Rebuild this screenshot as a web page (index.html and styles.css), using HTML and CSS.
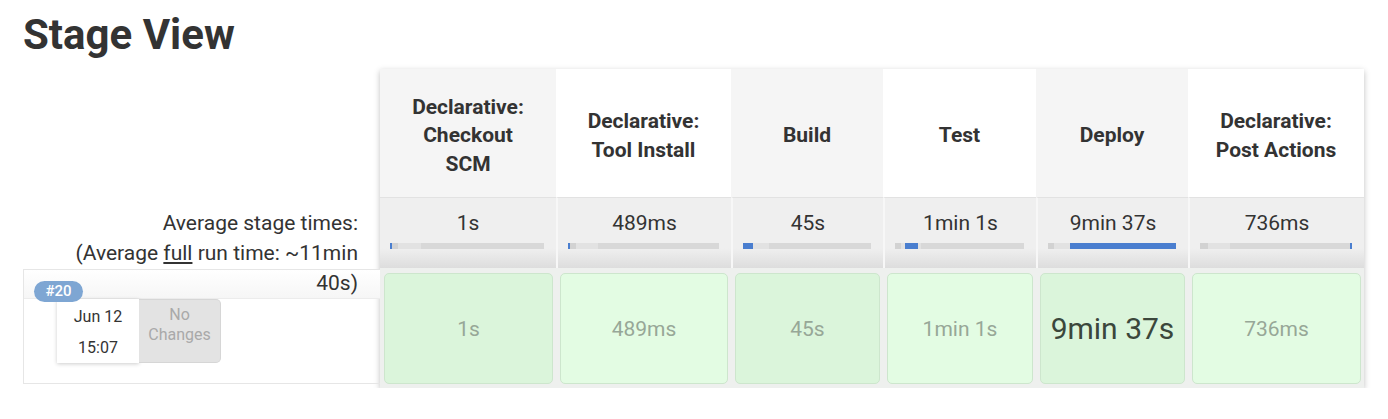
FILE: index.html
```html
<!DOCTYPE html>
<html>
<head>
<meta charset="utf-8">
<title>Stage View</title>
<link rel="stylesheet" href="styles.css">
</head>
<body>
<h2 class="title">Stage View</h2>
<div class="stage-view">
  <div class="labels">
    <div class="labels-head"></div>
    <div class="avg-label">Average stage times:<br>(Average <u>full</u> run time: ~11min<br>40s)</div>
    <div class="build-row">
      <div class="build-top"></div>
      <span class="badge">#20</span>
      <div class="build-info">
        <div class="date">Jun 12<br>15:07</div>
        <div class="changes">No<br>Changes</div>
      </div>
    </div>
  </div>
  <div class="table">
    <div class="th shade">Declarative:<br>Checkout<br>SCM</div>
    <div class="th">Declarative:<br>Tool Install</div>
    <div class="th shade">Build</div>
    <div class="th">Test</div>
    <div class="th shade">Deploy</div>
    <div class="th">Declarative:<br>Post Actions</div>

    <div class="avg first"><div class="val">1s</div><div class="bar"><span class="fill" style="left:0;width:2px"></span></div></div>
    <div class="avg"><div class="val">489ms</div><div class="bar"><span class="fill" style="left:0;width:2px"></span></div></div>
    <div class="avg"><div class="val">45s</div><div class="bar"><span class="fill" style="left:0;width:8%"></span></div></div>
    <div class="avg"><div class="val">1min 1s</div><div class="bar"><span class="fill" style="left:8%;width:10%"></span></div></div>
    <div class="avg"><div class="val">9min 37s</div><div class="bar"><span class="fill" style="left:17%;width:83%"></span></div></div>
    <div class="avg"><div class="val">736ms</div><div class="bar"><span class="fill" style="right:0;width:2px"></span></div></div>

    <div class="cell"><div class="box dark">1s</div></div>
    <div class="cell"><div class="box">489ms</div></div>
    <div class="cell"><div class="box dark">45s</div></div>
    <div class="cell"><div class="box">1min 1s</div></div>
    <div class="cell"><div class="box dark big">9min 37s</div></div>
    <div class="cell"><div class="box">736ms</div></div>
  </div>
</div>
</body>
</html>
```

FILE: styles.css
```css
body {
  margin: 0;
  padding: 0 22px 0 23px;
  font-family: Roboto, "Liberation Sans", Arial, sans-serif;
  color: #333;
  background: #fff;
}

.title {
  margin: 12px 0 11px;
  font-size: 42px;
  line-height: 46px;
  font-weight: 700;
  color: #333;
}

.stage-view {
  display: flex;
  align-items: flex-start;
}

.labels {
  flex: none;
  width: 357px;
  display: flex;
  flex-direction: column;
}

.labels-head {
  height: 128px;
}

.avg-label {
  position: relative;
  z-index: 1;
  height: 72px;
  box-sizing: border-box;
  padding: 11px 22px 0 0;
  text-align: right;
  font-size: 21px;
  line-height: 30px;
  color: #333;
}

.build-row {
  position: relative;
  height: 115px;
  box-sizing: border-box;
  border: 1px solid #e6e6e6;
  border-right: none;
}

.build-top {
  height: 28px;
  background: linear-gradient(#ffffff, #f6f6f6);
  border-bottom: 1px solid #ececec;
}

.badge {
  position: absolute;
  z-index: 2;
  left: 10px;
  top: 11px;
  width: 49px;
  height: 21px;
  line-height: 21px;
  border-radius: 11px;
  background: #7ea6d3;
  color: #fff;
  font-size: 15px;
  font-weight: 500;
  text-align: center;
}

.build-info {
  display: flex;
  margin-left: 33px;
}

.date {
  width: 82px;
  height: 64px;
  box-sizing: border-box;
  padding-top: 2px;
  background: #fff;
  box-shadow: 0 1px 4px rgba(0, 0, 0, 0.2);
  text-align: center;
  font-size: 16px;
  line-height: 31px;
  color: #333;
}

.changes {
  width: 82px;
  height: 64px;
  box-sizing: border-box;
  padding-top: 5px;
  background: #e3e3e3;
  border: 1px solid #d6d6d6;
  border-left: none;
  border-radius: 0 5px 5px 0;
  text-align: center;
  font-size: 16px;
  line-height: 20px;
  color: #a9a9a9;
}

.table {
  flex: none;
  display: grid;
  grid-template-columns: 176px 175px 152px 153px 152px 176px;
  grid-template-rows: 128px 71px 120px;
  background: #eef0ee;
  box-shadow: 0 2px 6px rgba(0, 0, 0, 0.25);
}

.th {
  display: flex;
  align-items: center;
  justify-content: center;
  box-sizing: border-box;
  padding-top: 5px;
  text-align: center;
  font-weight: 700;
  font-size: 21px;
  line-height: 28.5px;
  color: #333;
  background: #fff;
}

.th.shade {
  background: #f5f5f5;
}

.avg {
  box-sizing: border-box;
  padding-top: 12px;
  border-top: 1px solid #e2e2e2;
  border-left: 2px solid #f7f7f7;
  background: linear-gradient(to bottom, #efefef 0%, #efefef 72%, #dddddd 100%);
  text-align: center;
}

.avg.first {
  border-left: none;
}

.val {
  font-size: 21px;
  line-height: 26px;
  color: #333;
}

.bar {
  position: relative;
  height: 6px;
  margin: 7px 12px 0 10px;
  background: linear-gradient(to right, #d2d2d2 0%, #d2d2d2 5%, #e2e2e2 5%, #e2e2e2 20%, #d8d8d8 20%, #d8d8d8 100%);
}

.fill {
  position: absolute;
  top: 0;
  bottom: 0;
  background: #4a7ecf;
}

.cell {
  box-sizing: border-box;
  padding: 5px 3px 4px 4px;
  display: flex;
}

.box {
  flex: 1;
  display: flex;
  align-items: center;
  justify-content: center;
  border: 1px solid #cde6cd;
  border-radius: 5px;
  background: #e3fce3;
  font-size: 21px;
  color: #97a797;
}

.box.dark {
  background: #dbf5db;
}

.box.big {
  font-size: 30px;
  color: #3b473b;
}
```
